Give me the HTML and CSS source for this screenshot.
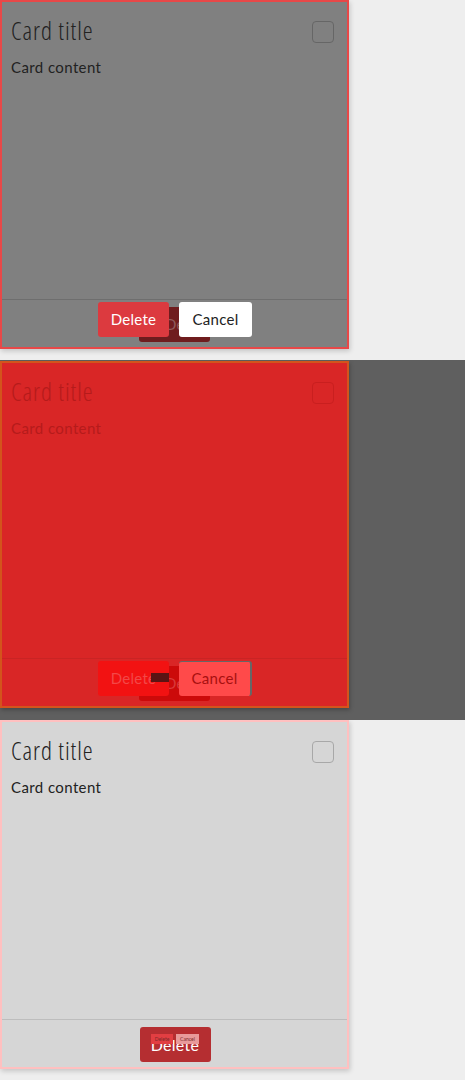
FILE: index.html
```html
<!DOCTYPE html>
<html>
<head>
<meta charset="utf-8">
<link rel="stylesheet" href="styles.css">
</head>
<body>
<section class="stage stage-light">
  <div class="card card-a">
    <div class="card-head">
      <h2 class="card-title">Card title</h2>
      <span class="check"></span>
    </div>
    <p class="card-body">Card content</p>
    <div class="card-foot">
      <span class="btn btn-ghost">Dele</span>
      <span class="btn btn-delete">Delete</span>
      <span class="btn btn-cancel">Cancel</span>
    </div>
  </div>
</section>
<section class="stage stage-dark">
  <div class="card card-b">
    <div class="card-head">
      <h2 class="card-title">Card title</h2>
      <span class="check"></span>
    </div>
    <p class="card-body">Card content</p>
    <div class="card-foot">
      <span class="btn btn-ghost">Dele</span>
      <span class="btn btn-delete">Delete</span>
      <span class="btn btn-cancel">Cancel</span>
      <span class="smudge"></span>
    </div>
  </div>
</section>
<section class="stage stage-light">
  <div class="card card-c">
    <div class="card-head">
      <h2 class="card-title">Card title</h2>
      <span class="check"></span>
    </div>
    <p class="card-body">Card content</p>
    <div class="card-foot">
      <span class="btn btn-main">Delete</span>
      <span class="mini mini-del">Delete</span>
      <span class="mini mini-can">Cancel</span>
    </div>
  </div>
</section>
</body>
</html>
```
FILE: styles.css
```css
* { box-sizing: border-box; }
html, body { margin: 0; padding: 0; }
body {
  background: #eeeeee;
  font-family: Lato, "Noto Sans", sans-serif;
  width: 465px;
}
.stage {
  height: 360px;
  overflow: hidden;
}
.stage-light { background: #eeeeee; }
.stage-dark { background: #5f5f5f; padding-top: 1px; }

.card {
  width: 349px;
  height: 349px;
  border: 2px solid #e84848;
  background: #808080;
  display: flex;
  flex-direction: column;
  box-shadow: 1px 2px 5px rgba(0,0,0,0.18);
}
.card-head {
  display: flex;
  justify-content: space-between;
  align-items: flex-start;
  padding: 13px 13px 0 9px;
}
.card-title {
  margin: 0;
  font-family: "Open Sans", "DejaVu Sans Condensed", sans-serif;
  font-stretch: 75%;
  font-weight: 300;
  font-size: 25px;
  line-height: 30px;
  color: #222;
  letter-spacing: 0.9px;
}
.check {
  width: 22px;
  height: 22px;
  margin-top: 6px;
  border: 1px solid #666;
  border-radius: 4px;
}
.card-body {
  margin: 13px 0 0 9px;
  font-size: 15px;
  line-height: 18px;
  letter-spacing: 0.4px;
  color: #222;
  flex: 1;
}
.card-foot {
  position: relative;
  height: 48px;
  border-top: 1px solid #6e6e6e;
  display: flex;
  justify-content: center;
  align-items: flex-start;
  gap: 10px;
  padding-top: 2px;
  padding-left: 1px;
}
.btn {
  height: 35px;
  border-radius: 3px;
  font-size: 15px;
  line-height: 35px;
  letter-spacing: 0.3px;
  text-align: center;
  position: relative;
}
.btn-delete {
  width: 71px;
  background: #dc3a3f;
  color: #fff;
}
.btn-cancel {
  width: 73px;
  background: #fff;
  color: #222;
}
.btn-ghost {
  position: absolute;
  left: 137px;
  top: 7px;
  width: 71px;
  background: #6f1c1e;
  color: #8e5a5b;
  padding-left: 26px;
  text-align: left;
}

/* card B: red flash state */
.card-b {
  background: #d92626;
  border-color: #d3541c;
  height: 347px;
  box-shadow: 1px 2px 4px rgba(0,0,0,0.25);
}
.card-b .card-title { color: #b51b1b; }
.card-b .card-body { color: #b51b1b; }
.card-b .check { border-color: #c91f1f; }
.card-b .card-foot { border-top-color: #c92424; }
.card-b .btn-delete { background: #f21212; color: #f34848; }
.card-b .btn-cancel {
  background: #ff4a4a;
  color: #a81010;
  border-top: 1px solid #666;
  border-right: 2px solid #666;
  line-height: 33px;
}
.card-b .btn-ghost { background: #cc0a0a; color: #d83a3a; }
.smudge {
  position: absolute;
  left: 149px;
  top: 14px;
  width: 18px;
  height: 9px;
  background: #5a1414;
}

/* card C: collapsed state */
.card-c {
  background: #d6d6d6;
  border-color: #ffc0c0;
}
.card-c .check { border-color: #a8a8a8; }
.card-c .card-foot {
  border-top-color: #bdbdbd;
  padding-top: 7px;
}
.btn-main {
  width: 71px;
  background: #b52e31;
  color: #fff;
  font-size: 16px;
  line-height: 35px;
}
.mini {
  position: absolute;
  top: 14px;
  height: 10px;
  font-size: 5px;
  line-height: 10px;
  letter-spacing: 0;
  text-align: center;
  color: #7a2a2a;
}
.mini-del { left: 149px; width: 22px; background: #e23e42; }
.mini-can { left: 174px; width: 23px; background: #e89a9a; }
```
